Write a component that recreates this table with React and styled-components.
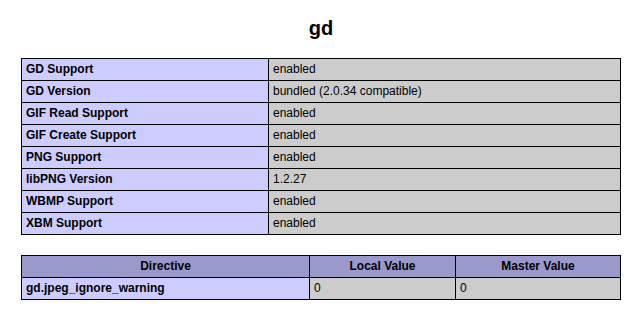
import styled, { createGlobalStyle } from "styled-components";

const GlobalStyle = createGlobalStyle`
  html, body {
    margin: 0;
    padding: 0;
    background: #ffffff;
    color: #000000;
    font-family: "Liberation Sans", Arial, sans-serif;
  }
`;

const Page = styled.div`
  padding: 16px 21px 0 21px;
  width: 600px;
`;

const Title = styled.h2`
  margin: 0 0 18px 0;
  height: 24px;
  line-height: 24px;
  font-size: 20px;
  font-weight: bold;
  text-align: center;
`;

const Table = styled.table`
  width: 600px;
  border-collapse: collapse;
  table-layout: fixed;
  margin-bottom: 20px;
`;

const Cell = styled.td`
  box-sizing: border-box;
  border: 1px solid #000000;
  font-size: 12px;
  line-height: 15px;
  padding: 3px 3px 3px 4px;
  height: 22px;
  vertical-align: middle;
  background: ${(p) => (p.$kind === "e" ? "#ccccff" : "#cccccc")};
  font-weight: ${(p) => (p.$kind === "e" ? "bold" : "normal")};
  color: #000000;
`;

const Head = styled.th`
  box-sizing: border-box;
  border: 1px solid #000000;
  font-size: 12px;
  line-height: 15px;
  padding: 3px;
  height: 22px;
  background: #9999cc;
  font-weight: bold;
  text-align: center;
  width: ${(p) => p.$w || "auto"};
`;

const Col = styled.col`
  width: ${(p) => p.$w || "auto"};
`;

const info = [
  ["GD Support", "enabled"],
  ["GD Version", "bundled (2.0.34 compatible)"],
  ["GIF Read Support", "enabled"],
  ["GIF Create Support", "enabled"],
  ["PNG Support", "enabled"],
  ["libPNG Version", "1.2.27"],
  ["WBMP Support", "enabled"],
  ["XBM Support", "enabled"],
];

const directives = [["gd.jpeg_ignore_warning", "0", "0"]];

export default function App() {
  return (
    <Page>
      <GlobalStyle />
      <Title>gd</Title>
      <Table>
        <colgroup>
          <Col $w="247px" />
          <Col />
        </colgroup>
        <tbody>
          {info.map(([k, v]) => (
            <tr key={k}>
              <Cell $kind="e">{k}</Cell>
              <Cell $kind="v">{v}</Cell>
            </tr>
          ))}
        </tbody>
      </Table>
      <Table>
        <colgroup>
          <Col $w="288px" />
          <Col $w="146px" />
          <Col />
        </colgroup>
        <tbody>
          <tr>
            <Head>Directive</Head>
            <Head>Local Value</Head>
            <Head>Master Value</Head>
          </tr>
          {directives.map(([k, l, m]) => (
            <tr key={k}>
              <Cell $kind="e">{k}</Cell>
              <Cell $kind="v">{l}</Cell>
              <Cell $kind="v">{m}</Cell>
            </tr>
          ))}
        </tbody>
      </Table>
    </Page>
  );
}
